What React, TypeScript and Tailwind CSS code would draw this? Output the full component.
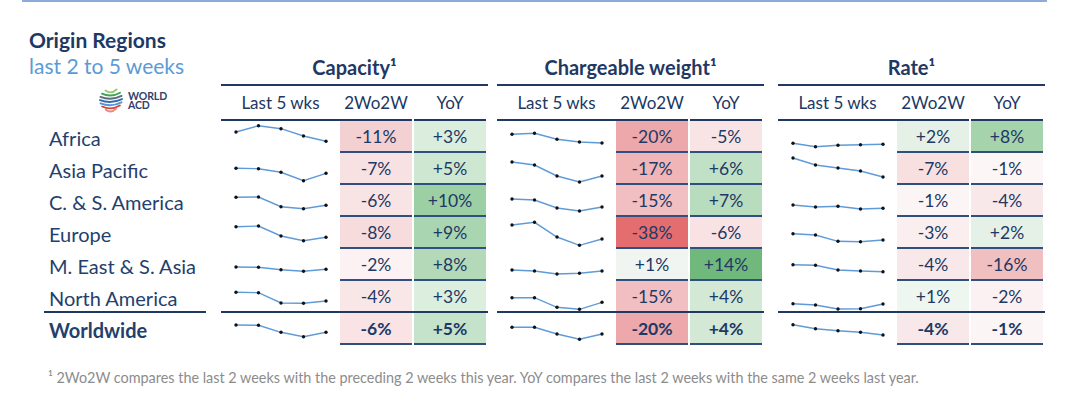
import React from 'react';

type Metric = { spark: number[]; w: string; y: string; wc: string; yc: string };
type Row = { name: string; cap: Metric; cw: Metric; rate: Metric };

const m = (spark: number[], w: string, wc: string, y: string, yc: string): Metric => ({ spark, w, y, wc, yc });

const ROWS: Row[] = [
  {
    name: 'Africa',
    cap: m([11, 4.7, 7.7, 15, 20.3], '-11%', '#f3d0d1', '+3%', '#dbeedd'),
    cw: m([13.3, 12.3, 18.3, 21, 22], '-20%', '#eca8aa', '-5%', '#f9e4e5'),
    rate: m([22.3, 25.7, 24.3, 23.7, 23.3], '+2%', '#e5f1e7', '+8%', '#a5d3ac'),
  },
  {
    name: 'Asia Pacific',
    cap: m([15.3, 15.7, 19.3, 27.7, 20.3], '-7%', '#f8e1e2', '+5%', '#cde7d1'),
    cw: m([9, 12, 23, 29, 23], '-17%', '#efb5b7', '+6%', '#c0e1c6'),
    rate: m([5, 12, 15, 18, 24], '-7%', '#f8e0e1', '-1%', '#fcf6f6'),
  },
  {
    name: 'C. & S. America',
    cap: m([12.3, 12, 21.7, 23.7, 20.3], '-6%', '#f9e4e5', '+10%', '#9dcfa5'),
    cw: m([14, 15, 23, 26, 22], '-15%', '#f1bfc1', '+7%', '#b8dcbe'),
    rate: m([20, 22, 21.3, 24, 23.3], '-1%', '#fcf5f6', '-4%', '#f9e8e9'),
  },
  {
    name: 'Europe',
    cap: m([9.7, 9, 19, 23.7, 20.3], '-8%', '#f6dcdd', '+9%', '#a9d5b0'),
    cw: m([8, 5.3, 20, 28.3, 22], '-38%', '#e46e6f', '-6%', '#f8e2e3'),
    rate: m([16.7, 18, 24.3, 24.7, 23], '-3%', '#faeeee', '+2%', '#e5f1e7'),
  },
  {
    name: 'M. East & S. Asia',
    cap: m([18, 18.3, 20.7, 22.3, 20.3], '-2%', '#fcf2f3', '+8%', '#b3d9b9'),
    cw: m([21, 22, 25, 24.3, 22], '+1%', '#f1f5f2', '+14%', '#70b87c'),
    rate: m([15.7, 16.3, 21, 22, 22.7], '-4%', '#f9e8e9', '-16%', '#f0bfc0'),
  },
  {
    name: 'North America',
    cap: m([11.3, 11.7, 22, 22.3, 20], '-4%', '#f9e7e8', '+3%', '#dcefdf'),
    cw: m([16.7, 16.7, 26.3, 28.3, 21.3], '-15%', '#f1bfc1', '+4%', '#d3e9d6'),
    rate: m([22.7, 24, 28, 27.7, 23], '+1%', '#eef6f0', '-2%', '#fbf1f2'),
  },
  {
    name: 'Worldwide',
    cap: m([12, 12.3, 19.3, 23.7, 19.3], '-6%', '#f9e3e4', '+5%', '#c5e3ca'),
    cw: m([14.3, 14.3, 21, 26.3, 21], '-20%', '#eca8aa', '+4%', '#d3e9d6'),
    rate: m([11.7, 15.7, 17.7, 19.3, 22], '-4%', '#f9e8e9', '-1%', '#fcf5f6'),
  },
];

const GROUPS = ['Capacity', 'Chargeable weight', 'Rate'];
const GAPS = ['ml-[0px]', 'ml-[9px]', 'ml-[14px]'];

function Spark({ ys, h }: { ys: number[]; h: number }) {
  const xs = [15, 37.5, 60, 82.5, 105];
  const pts = xs.map((x, i) => `${x},${ys[i]}`).join(' ');
  return (
    <svg width={119} height={h} className="block shrink-0">
      <polyline points={pts} fill="none" stroke="#5f9bd8" strokeWidth={1.4} />
      {xs.map((x, i) => (
        <circle key={i} cx={x} cy={ys[i]} r={1.7} fill="#111" />
      ))}
    </svg>
  );
}

function Logo() {
  const colors = ['#9acb6a', '#3ea35f', '#5e6b78', '#2f6db5', '#5b93d3', '#d8453c', '#e98a80'];
  return (
    <div className="flex items-center ml-[69px] mt-[10px]">
      <svg width={27} height={26} viewBox="0 0 27 26" className="block">
        {colors.map((c, i) => {
          const y = 3.5 + i * 3.2;
          const dy = y - 13;
          const w = Math.sqrt(Math.max(0, 121 - dy * dy));
          const x1 = 13 - w;
          const x2 = 13 + w;
          return (
            <path
              key={i}
              d={`M ${x1} ${y - 1} Q 13 ${y + 3.2} ${x2} ${y - 2}`}
              fill="none"
              stroke={c}
              strokeWidth={1.9}
              strokeLinecap="round"
            />
          );
        })}
      </svg>
      <div className="ml-[3px] text-[10.5px] leading-[9.5px] font-bold text-[#33406b] tracking-[-0.1px]">
        <div>WORLD</div>
        <div>ACD</div>
      </div>
    </div>
  );
}

function Cell({ text, bg, bold, noBorder }: { text: string; bg: string; bold?: boolean; noBorder?: boolean }) {
  return (
    <div
      className={
        'w-[72px] text-center text-[17.5px] leading-[20px] text-[#203864] ' +
        (noBorder ? 'h-[30px] pt-[6px] ' : 'h-[32px] pt-[6px] border-b-2 border-[#2e4f80] ') +
        (bold ? 'font-bold' : '')
      }
      style={{ backgroundColor: bg }}
    >
      {text}
    </div>
  );
}

function GroupRow({ metric, idx, bold, nat }: { metric: Metric; idx: number; bold: boolean; nat: boolean }) {
  return (
    <div
      className={
        'flex w-[267px] ' + GAPS[idx] + (nat ? ' h-[32px] border-b-2 border-[#1f3864]' : ' h-[32px]')
      }
    >
      <Spark ys={metric.spark} h={nat ? 30 : 32} />
      <Cell text={metric.w} bg={metric.wc} bold={bold} noBorder={nat} />
      <div className="w-[2px]" />
      <Cell text={metric.y} bg={metric.yc} bold={bold} noBorder={nat} />
    </div>
  );
}

function GroupHeader({ title, idx }: { title: string; idx: number }) {
  return (
    <div className={'flex flex-col w-[267px] ' + GAPS[idx]}>
      <div className="h-[82px] flex flex-col justify-end pb-[5px]">
        <div className="text-center text-[20px] leading-[24px] font-bold text-[#1f3864]">
          {title}¹
        </div>
      </div>
      <div className="h-[2px] bg-[#1f3864]" />
      <div className="flex h-[35px] text-[17px] leading-[20px] text-[#203864]">
        <div className="w-[119px] text-center pt-[7px] border-b-2 border-[#1f3864]">Last 5 wks</div>
        <div className="w-[72px] text-center pt-[7px] border-b-2 border-[#1f3864]">2Wo2W</div>
        <div className="w-[2px]" />
        <div className="w-[72px] text-center pt-[7px] border-b-2 border-[#1f3864]">YoY</div>
      </div>
    </div>
  );
}

export default function App() {
  return (
    <div className="w-[1080px] h-[410px] bg-white overflow-hidden font-[Lato,sans-serif]">
      <div className="ml-[22px] w-[1025px] h-[2px] bg-[#8eaadb]" />

      {/* Header */}
      <div className="flex h-[119px]">
        <div className="w-[221px] pl-[29px] pt-[26px]">
          <div className="text-[21px] leading-[24px] font-bold text-[#1f3864]">Origin Regions</div>
          <div className="mt-[2px] text-[21px] leading-[24px] text-[#5b9bd5]">last 2 to 5 weeks</div>
          <Logo />
        </div>
        {GROUPS.map((g, i) => (
          <GroupHeader key={g} title={g} idx={i} />
        ))}
      </div>

      {/* Rows */}
      <div className="flex flex-col">
        {ROWS.map((r, ri) => {
          const bold = ri === ROWS.length - 1;
          const nat = ri === ROWS.length - 2;
          return (
            <div key={r.name} className="flex">
              <div
                className={
                  'ml-[44px] w-[162px] mr-[15px] pl-[5px] text-[20px] leading-[20px] text-[#243f6d] ' +
                  (nat ? 'h-[32px] pt-[7px] border-b-2 border-[#1f3864] ' : 'h-[32px] pt-[7px] ') +
                  (bold ? 'font-bold text-[#1f3864]' : '')
                }
              >
                {r.name}
              </div>
              <GroupRow metric={r.cap} idx={0} bold={bold} nat={nat} />
              <GroupRow metric={r.cw} idx={1} bold={bold} nat={nat} />
              <GroupRow metric={r.rate} idx={2} bold={bold} nat={nat} />
            </div>
          );
        })}
      </div>

      {/* Footnote */}
      <div className="mt-[23px] pl-[48px] text-[14.4px] leading-[20px] text-[#8c8c8c]">
        ¹ 2Wo2W compares the last 2 weeks with the preceding 2 weeks this year. YoY compares the last 2 weeks with the same 2 weeks last year.
      </div>
    </div>
  );
}
